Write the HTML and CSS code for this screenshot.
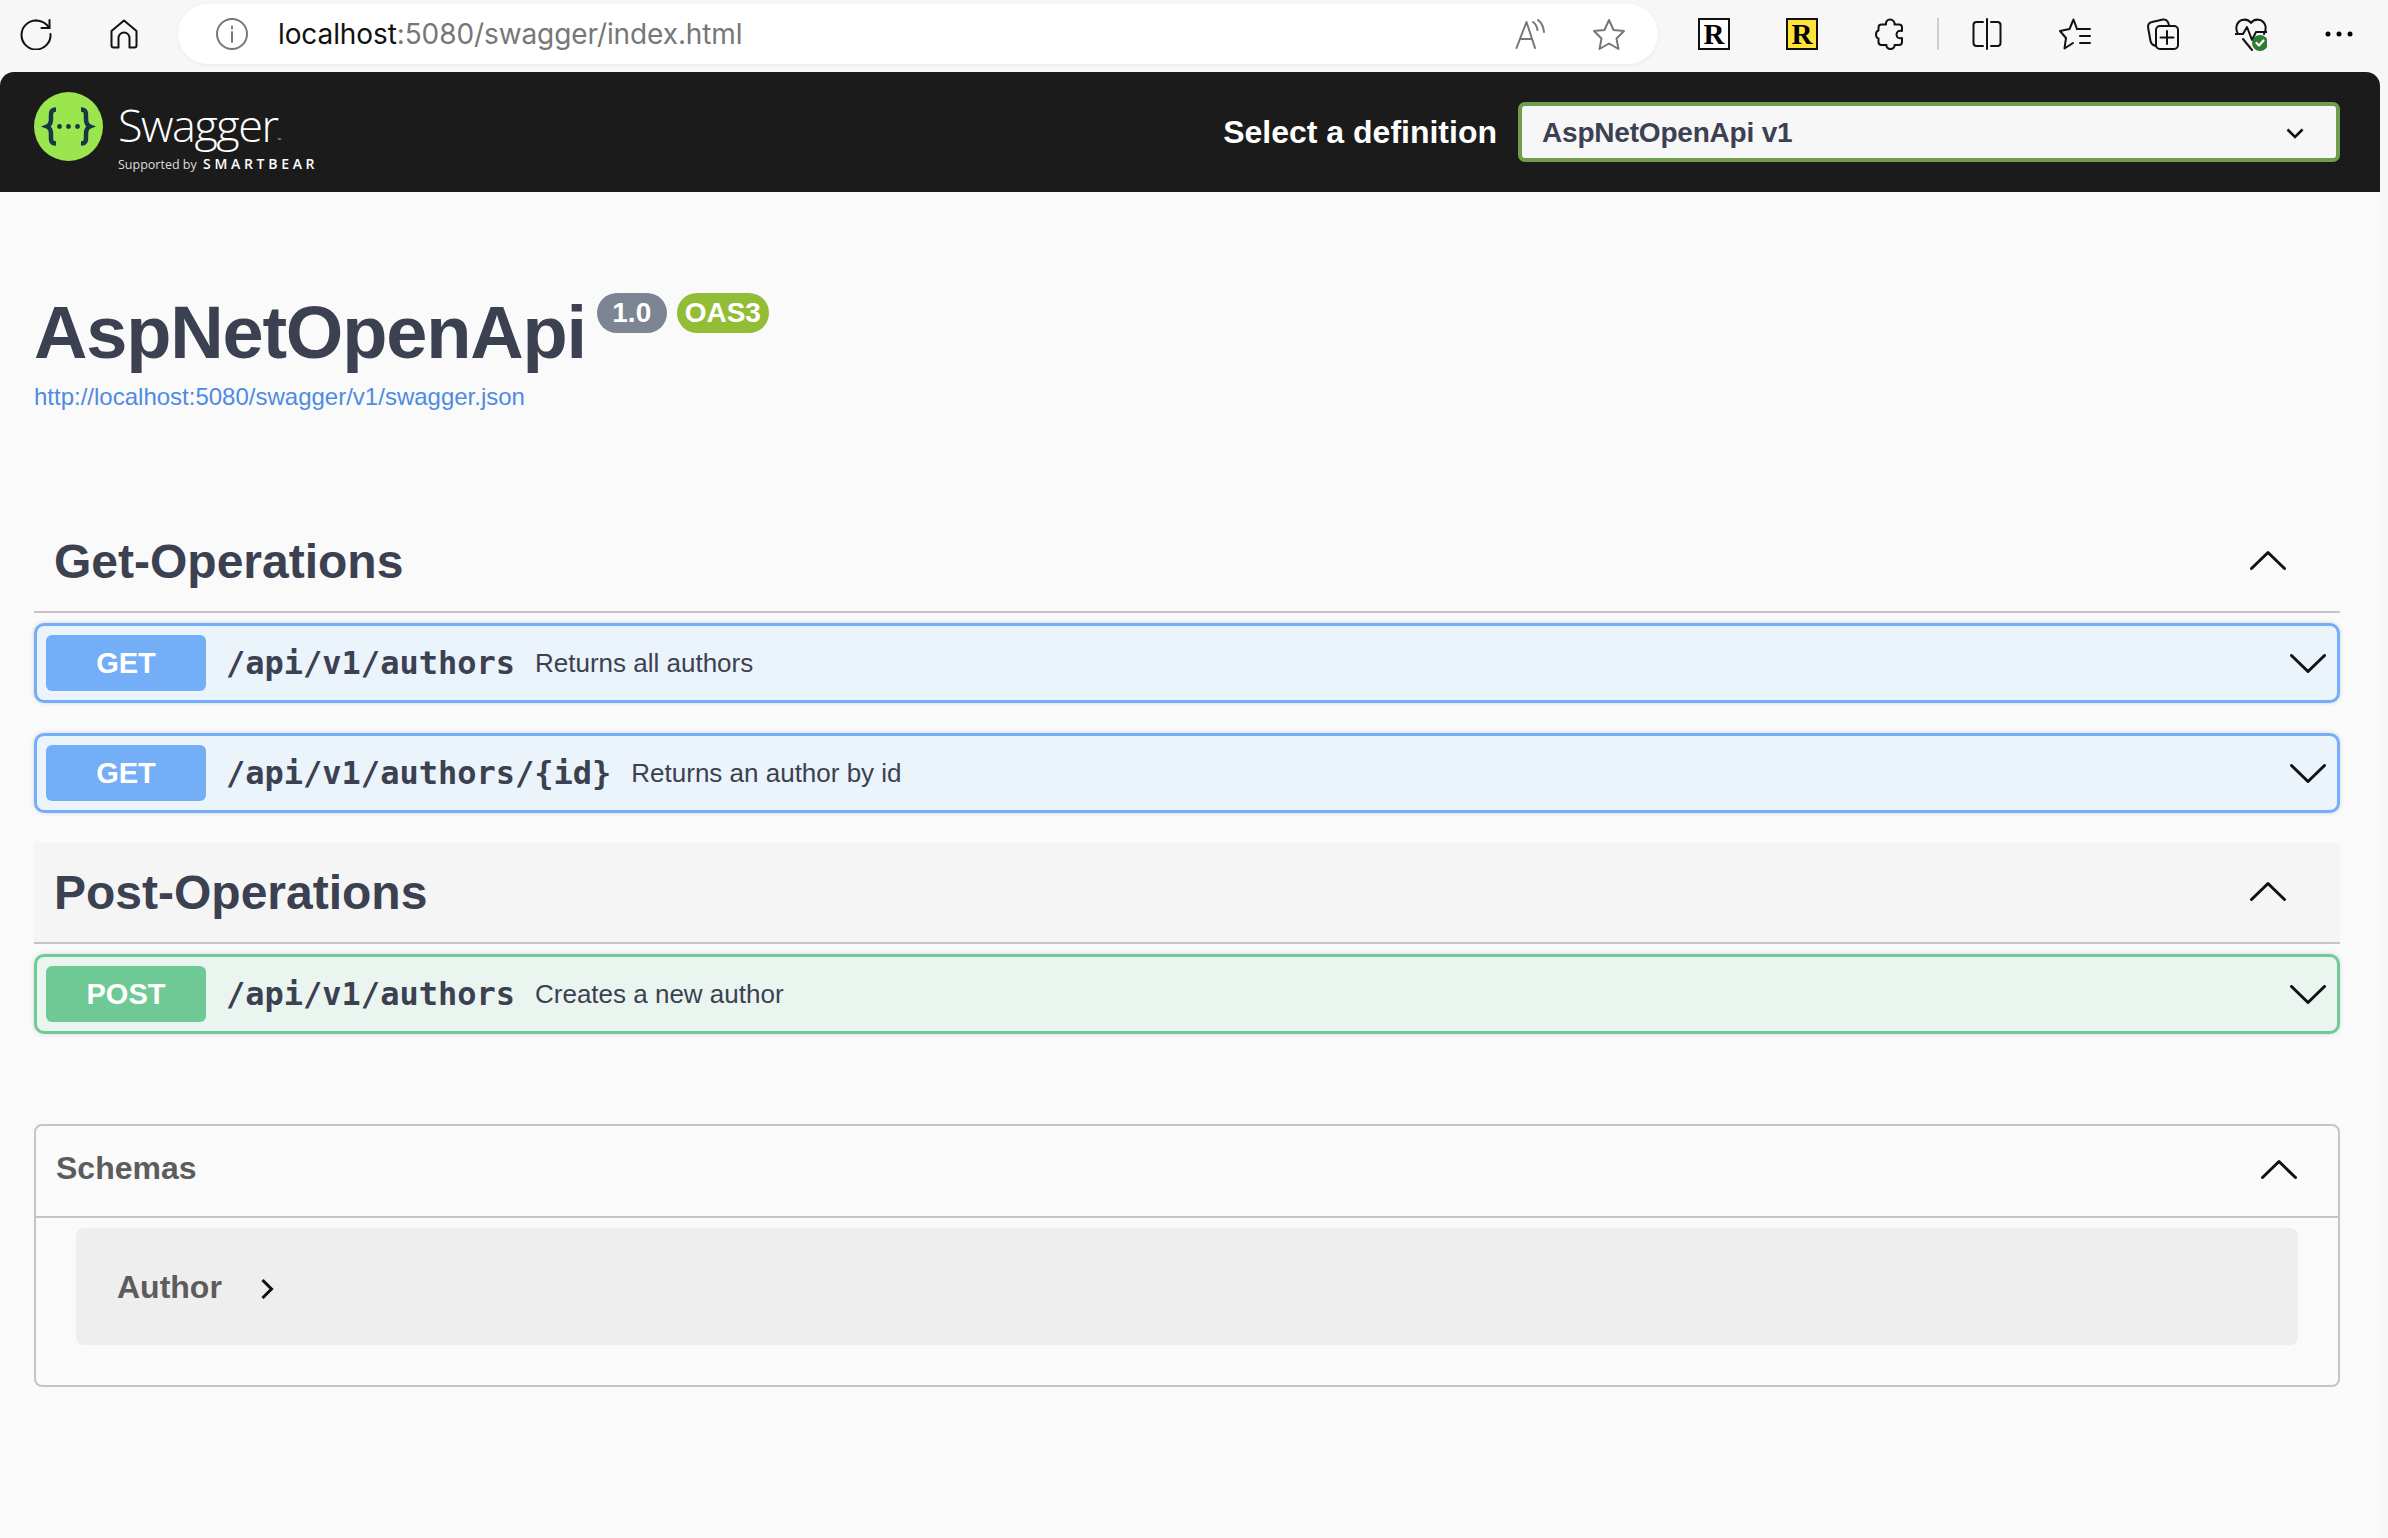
FILE: index.html
```html
<!DOCTYPE html>
<html lang="en">
<head>
<meta charset="utf-8">
<title>Swagger UI</title>
<link rel="stylesheet" href="styles.css">
</head>
<body>
<div class="toolbar">
  <span class="tb-btn first"><svg class="ic" width="32" height="32" viewBox="0 0 32 32"><path d="M16 2.5A14.5 14.5 0 1 0 30.500 16"/><path d="M29.500 2V10H21.500"/><path d="M16 2.500C21 2.500 26 5 29.500 10"/></svg></span>
  <span class="tb-btn"><svg class="ic" width="28" height="30" viewBox="0 0 28 30"><path d="M14 1.500L26.500 12V26.500A2 2 0 0 1 24.500 28.500H19.500V19A5.500 5.500 0 0 0 8.500 19V28.500H3.500A2 2 0 0 1 1.500 26.500V12Z"/></svg></span>
  <div class="address">
    <svg class="ic-gray" width="32" height="32" viewBox="0 0 32 32"><circle cx="16" cy="16" r="15"/><path d="M16 14V24"/><path d="M16 8.500V10.500"/></svg>
    <span class="url"><span class="url-host">localhost</span>:5080/swagger/index.html</span>
    <svg class="ic-gray" width="32" height="30" viewBox="0 0 32 30"><path d="M1.500 29L11.500 3L20 29"/><path d="M5 20H17"/><path d="M18 3C21 5 22 8 22.500 11"/><path d="M23 1C27 4 28.500 8 29 13"/></svg>
    <svg class="ic-gray star" width="34" height="32" viewBox="0 0 34 32"><path d="M17 2L21.500 12L32 13L24.500 20.500L26.500 31L17 25.500L7.500 31L9.500 20.500L2 13L12.500 12Z"/></svg>
  </div>
  <span class="tb-btn after-address"><span class="ext-r">R</span></span>
  <span class="tb-btn"><span class="ext-r yellow">R</span></span>
  <span class="tb-btn"><svg class="ic" width="30" height="32" viewBox="0 0 30 32"><path d="M15 1.500C18 1.500 20 4 19.500 6.500H24A3 3 0 0 1 27 9.500V13C24 12 21.500 13.500 21.500 16.500S24 21 27 20V24A3 3 0 0 1 24 27H19.500C20 29 18 31 15.500 31S11 29 11.500 27H6A3 3 0 0 1 3.500 24V20.500C1.500 20 1 18 1 16.500S2 13 3.500 12.500V9.500A3 3 0 0 1 6.500 6.500H11C10.500 4 12 1.500 15 1.500Z"/></svg></span>
  <span class="tb-divider"></span>
  <span class="tb-btn after-divider"><svg class="ic" width="30" height="32" viewBox="0 0 30 32"><path d="M11 4H4A3 3 0 0 0 1.500 7V25A3 3 0 0 0 4 28H11"/><path d="M19 4H26A3 3 0 0 1 28.500 7V25A3 3 0 0 1 26 28H19"/><path d="M15 1V31"/></svg></span>
  <span class="tb-btn"><svg class="ic" width="32" height="32" viewBox="0 0 32 32"><path d="M18 11L14.500 1.500L10.500 11L1 13L7 20L5.500 30.500L14 25"/><path d="M18 11H31"/><path d="M21 18H31"/><path d="M21 25H31"/></svg></span>
  <span class="tb-btn"><svg class="ic" width="32" height="32" viewBox="0 0 32 32"><path d="M9 28C5 27 4 25.500 3.500 23L1 9C1 6 2.500 4.500 5 4L16 1.500C19 1 21 3 22 7"/><rect x="9" y="8" width="22" height="23" rx="4"/><path d="M20 13V26"/><path d="M13.500 19.500H26.500"/></svg></span>
  <span class="tb-btn"><svg class="ic" width="32" height="34" viewBox="0 0 32 34"><path d="M3 17C0 12 1 5 7 3C11 2 14 3 16 6C18 3 21 2 25 3C31 5 32 12 29 17"/><path d="M0 17H8L12 10L17 23L21 15H32"/><path d="M8 22L17 33"/><circle class="badge-ok" cx="25" cy="26" r="8"/><path class="badge-check" d="M21.500 26L24 28.500L28.500 23.500"/></svg></span>
  <span class="tb-btn"><svg width="28" height="6" viewBox="0 0 28 6"><circle cx="3" cy="3" r="2.500"/><circle cx="14" cy="3" r="2.500"/><circle cx="25" cy="3" r="2.500"/></svg></span>
</div>

<div class="page">
  <header class="topbar">
    <div class="brand">
      <svg class="brand-mark" width="69" height="69" viewBox="0 0 69 69"><circle cx="34.500" cy="34.500" r="34.500" fill="#9be54f"/><path class="brace" d="M22 17.500C16 17.500 17 22 17 27C17 31 15.500 33.500 13 34.500C15.500 35.500 17 38 17 42C17 47 16 51.500 22 51.500"/><path class="brace" d="M47 17.500C53 17.500 52 22 52 27C52 31 53.500 33.500 56 34.500C53.500 35.500 52 38 52 42C52 47 53 51.500 47 51.500"/><circle cx="25.500" cy="34.500" r="2.400" fill="#173646"/><circle cx="34.500" cy="34.500" r="2.400" fill="#173646"/><circle cx="43.500" cy="34.500" r="2.400" fill="#173646"/></svg>
      <div class="brand-text">
        <div class="brand-name">Swagger<span class="brand-tm">™</span></div>
        <div class="brand-sub"><span class="brand-by">Supported by</span><span class="brand-bear">SMARTBEAR</span></div>
      </div>
    </div>
    <div class="definition">
      <span class="definition-label">Select a definition</span>
      <div class="definition-select">
        <span>AspNetOpenApi v1</span>
        <svg class="chev-small" width="18" height="11" viewBox="0 0 18 11"><path d="M1.500 1.500L9 9L16.500 1.500"/></svg>
      </div>
    </div>
  </header>

  <main class="content">
    <section class="api-info">
      <div class="title-row">
        <h1 class="title">AspNetOpenApi</h1>
        <span class="pill grey">1.0</span>
        <span class="pill green">OAS3</span>
      </div>
      <a class="spec-link" href="#">http://localhost:5080/swagger/v1/swagger.json</a>
    </section>

    <section class="tag">
      <div class="tag-head">
        <h2>Get-Operations</h2>
        <svg class="chev up" width="36" height="20" viewBox="0 0 36 20"><path d="M1.500 18.500L18 2.500L34.500 18.500"/></svg>
      </div>
      <div class="op get">
        <span class="method">GET</span>
        <span class="path">/api/v1/authors</span>
        <span class="desc">Returns all authors</span>
        <svg class="chev down" width="36" height="20" viewBox="0 0 36 20"><path d="M1.500 1.500L18 17.500L34.500 1.500"/></svg>
      </div>
      <div class="op get">
        <span class="method">GET</span>
        <span class="path">/api/v1/authors/{id}</span>
        <span class="desc">Returns an author by id</span>
        <svg class="chev down" width="36" height="20" viewBox="0 0 36 20"><path d="M1.500 1.500L18 17.500L34.500 1.500"/></svg>
      </div>
    </section>

    <section class="tag">
      <div class="tag-head shaded">
        <h2>Post-Operations</h2>
        <svg class="chev up" width="36" height="20" viewBox="0 0 36 20"><path d="M1.500 18.500L18 2.500L34.500 18.500"/></svg>
      </div>
      <div class="op post">
        <span class="method">POST</span>
        <span class="path">/api/v1/authors</span>
        <span class="desc">Creates a new author</span>
        <svg class="chev down" width="36" height="20" viewBox="0 0 36 20"><path d="M1.500 1.500L18 17.500L34.500 1.500"/></svg>
      </div>
    </section>

    <section class="schemas">
      <div class="schemas-head">
        <h4>Schemas</h4>
        <svg class="chev up-schema" width="36" height="20" viewBox="0 0 36 20"><path d="M1.500 18.500L18 2.500L34.500 18.500"/></svg>
      </div>
      <div class="schemas-body">
        <div class="model">
          <span class="model-name">Author</span>
          <svg class="model-chev" width="14" height="22" viewBox="0 0 14 22"><path d="M2.500 2L11.500 11L2.500 20"/></svg>
        </div>
      </div>
    </section>
  </main>
</div>
</body>
</html>
```
FILE: styles.css
```css
* { box-sizing: border-box; }
html, body { margin: 0; padding: 0; }
body {
  width: 2388px;
  height: 1538px;
  overflow: hidden;
  background: #f7f7f7;
  font-family: "Liberation Sans", Arial, sans-serif;
  color: #3b4151;
}
h1, h2, h4 { margin: 0; }

/* browser chrome */
.toolbar {
  height: 72px;
  display: flex;
  align-items: center;
  padding-left: 12px;
  padding-bottom: 4px;
}
.tb-btn {
  width: 48px;
  height: 48px;
  margin-left: 40px;
  display: flex;
  align-items: center;
  justify-content: center;
  flex: none;
}
.tb-btn.first { margin-left: 0; }
.tb-btn.after-address { margin-left: 32px; }
.tb-btn.after-divider { margin-left: 24px; }
.tb-divider {
  width: 2px;
  height: 32px;
  margin-left: 23px;
  background: #cfcfcf;
  flex: none;
}
.ic path, .ic rect { fill: none; stroke: #111; stroke-width: 2; stroke-linecap: round; stroke-linejoin: round; }
.ic .badge-ok { fill: #2f7d32; stroke: none; }
.ic .badge-check { stroke: #fff; stroke-width: 2.200; }
.ic-gray { flex: none; }
.ic-gray path, .ic-gray circle { fill: none; stroke: #777; stroke-width: 2; stroke-linecap: round; stroke-linejoin: round; }
.address {
  width: 1480px;
  height: 60px;
  margin-left: 30px;
  padding: 0 32px 0 38px;
  background: #fff;
  border-radius: 30px;
  box-shadow: 0 1px 4px rgba(0, 0, 0, .06);
  display: flex;
  align-items: center;
  flex: none;
}
.url {
  margin-left: 30px;
  font-family: Inter, sans-serif;
  font-size: 28px;
  letter-spacing: -.1px;
  color: #777;
  flex: 1;
}
.url-host { color: #111; }
.star { margin-left: 45px; }
.ext-r {
  width: 32px;
  height: 32px;
  border: 2px solid #111;
  background: #fff;
  font-family: "Liberation Serif", serif;
  font-weight: 700;
  font-size: 29px;
  line-height: 28px;
  text-align: center;
  color: #000;
}
.ext-r.yellow { background: #fde23a; }

/* page */
.page {
  width: 2380px;
  height: 1466px;
  background: #fafafa;
}
.topbar {
  height: 120px;
  background: #1b1b1b;
  border-radius: 14px 14px 0 0;
  padding: 0 40px 0 34px;
  display: flex;
  align-items: center;
  justify-content: space-between;
}
.brand { display: flex; align-items: center; }
.brand-mark { margin-top: -11px; }
.brand-text { margin: 2px 0 0 15px; font-family: "Open Sans", sans-serif; color: #fff; }
.brand-name { font-size: 45px; font-weight: 300; line-height: 50px; letter-spacing: -1.500px; margin-top: 8px; }
.brand-tm { font-size: 5px; letter-spacing: 0; }
.brand-sub { display: flex; align-items: baseline; margin-top: -11px; line-height: 20px; }
.brand-by { font-size: 12.500px; width: 85px; color: #ddd; white-space: nowrap; }
.brand-bear { font-size: 14px; font-weight: 600; letter-spacing: 3.700px; }
.brace { fill: none; stroke: #173646; stroke-width: 4.500; }
.definition { display: flex; align-items: center; }
.definition-label { font-size: 32px; font-weight: 700; color: #fff; white-space: nowrap; }
.definition-select {
  width: 822px;
  height: 60px;
  margin-left: 21px;
  padding: 2px 32px 0 20px;
  border: 4px solid #6f9d4e;
  border-radius: 7px;
  background: #f7f7f7;
  font-size: 28px;
  letter-spacing: -.2px;
  font-weight: 700;
  display: flex;
  align-items: center;
  justify-content: space-between;
}
.chev-small path { fill: none; stroke: #111; stroke-width: 2.600; }

.content { padding: 0 40px 0 34px; }
.api-info { height: 321px; padding-top: 91px; }
.title-row { display: flex; align-items: flex-start; }
.title { margin-top: 6px; font-size: 74px; line-height: 88px; letter-spacing: -1.200px; font-weight: 700; }
.pill {
  height: 40px;
  margin-top: 10px;
  border-radius: 20px;
  color: #fff;
  font-size: 28px;
  font-weight: 700;
  line-height: 40px;
  text-align: center;
}
.pill.grey { width: 70px; margin-left: 11px; background: #7d8492; }
.pill.green { width: 92px; margin-left: 10px; background: #93bd36; }
.spec-link { display: block; margin-top: 4px; font-size: 24px; line-height: 32px; color: #4f8be3; text-decoration: none; }

.tag { margin-bottom: 30px; }
.tag-head {
  height: 100px;
  padding: 0 54px 0 20px;
  border-bottom: 2px solid #c3c3c8;
  display: flex;
  align-items: center;
  justify-content: space-between;
}
.tag-head.shaded { height: 101px; background: #f5f5f5; }
.tag-head h2 { font-size: 48px; line-height: 60px; }
.chev path { fill: none; stroke: #111; stroke-width: 3; stroke-linecap: round; stroke-linejoin: round; }
.chev.up { margin-top: -4px; }
.op {
  height: 80px;
  margin-top: 10px;
  padding: 0 11px 0 9px;
  border: 3px solid;
  border-radius: 10px;
  display: flex;
  align-items: center;
  box-shadow: 0 0 5px rgba(0, 0, 0, .14);
}
.op + .op { margin-top: 30px; }
.op.get { border-color: #74aefa; background: #ebf3fb; }
.op.post { border-color: #6fcb94; background: #ebf5f0; }
.method {
  width: 160px;
  height: 56px;
  border-radius: 6px;
  color: #fff;
  font-size: 29px;
  font-weight: 700;
  line-height: 56px;
  text-align: center;
  flex: none;
}
.get .method { background: #73aef7; }
.post .method { background: #6fc994; }
.path {
  margin-left: 20px;
  font-family: "DejaVu Sans Mono", monospace;
  font-weight: 700;
  font-size: 32px;
}
.desc { margin-left: 20px; font-size: 26px; }
.down { margin-left: auto; margin-top: 2px; }

.schemas {
  margin-top: 90px;
  height: 263px;
  border: 2px solid #c4c4ca;
  border-radius: 8px;
  color: #5c5c5c;
}
.schemas-head {
  height: 92px;
  padding: 0 41px 5px 20px;
  border-bottom: 2px solid #c4c4ca;
  display: flex;
  align-items: center;
  justify-content: space-between;
}
.schemas-head h4 { font-size: 32px; }
.schemas-body { padding: 10px 40px 0; }
.model {
  height: 117px;
  padding-left: 41px;
  background: #eee;
  border-radius: 8px;
  display: flex;
  align-items: center;
}
.model-name { margin-top: 2px; font-size: 32px; font-weight: 700; }
.model-chev { margin: 4px 0 0 38px; }
.model-chev path { fill: none; stroke: #111; stroke-width: 3; }
```
